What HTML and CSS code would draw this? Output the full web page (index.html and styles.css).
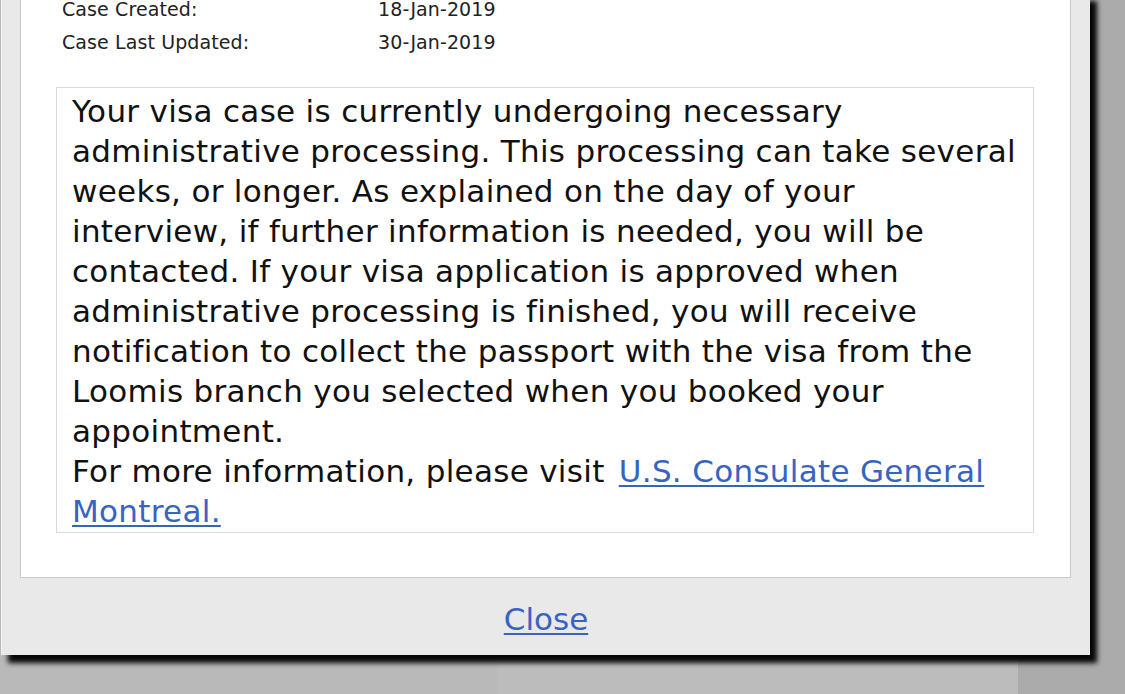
FILE: index.html
```html
<!DOCTYPE html>
<html>
<head>
<meta charset="utf-8">
<link rel="stylesheet" href="styles.css">
</head>
<body>
<div class="backdrop">
  <div class="bg-a"></div>
  <div class="bg-b"></div>
  <div class="bg-c"></div>
</div>
<div class="dialog">
  <div class="panel">
    <div class="info">
      <div class="row"><span class="label">Case Created:</span><span class="value">18-Jan-2019</span></div>
      <div class="row"><span class="label">Case Last Updated:</span><span class="value">30-Jan-2019</span></div>
    </div>
    <div class="message">
      <div class="para">Your visa case is currently undergoing necessary administrative processing. This processing can take several weeks, or longer. As explained on the day of your interview, if further information is needed, you will be contacted. If your visa application is approved when administrative processing is finished, you will receive notification to collect the passport with the visa from the Loomis branch you selected when you booked your appointment.</div>
      <div class="para">For more information, please visit <a href="#">U.S. Consulate General Montreal.</a></div>
    </div>
  </div>
  <div class="footer"><a href="#">Close</a></div>
</div>
</body>
</html>
```
FILE: styles.css
```css
html, body {
  margin: 0;
  padding: 0;
  width: 1125px;
  height: 694px;
  overflow: hidden;
  font-family: "DejaVu Sans", Verdana, sans-serif;
}
body {
  position: relative;
}
.backdrop {
  display: grid;
  grid-template-columns: 497px 521px 1fr;
  height: 694px;
}
.bg-a { background: #b9b9b9; }
.bg-b { background: #bcbcbc; }
.bg-c { background: #ababab; }

.dialog {
  position: absolute;
  left: 1px;
  top: -7px;
  width: 1089px;
  background: #e9e9e9;
  border-left: 1px solid #f4f4f4;
  box-sizing: border-box;
  box-shadow: 7px 8px 5px rgba(0, 0, 0, 0.97);
}
.panel {
  margin: 0 19px 0 18px;
  background: #fff;
  border: 1px solid #c9c9c9;
  border-top: none;
  padding: 0 36px 44px 35px;
}
.info {
  padding-left: 6px;
  padding-bottom: 28px;
  font-size: 19px;
  letter-spacing: 0.1px;
  color: #222;
}
.row {
  display: flex;
  height: 33px;
  line-height: 33px;
}
.label {
  width: 316px;
}
.message {
  border: 1px solid #dadada;
  padding: 3px 16px 1px 15px;
  font-size: 31px;
  letter-spacing: 0.3px;
  line-height: 40px;
  color: #111;
}
.message a, .footer a {
  color: #3764c3;
  text-decoration: underline;
  text-decoration-thickness: 2px;
  text-underline-offset: 3px;
}
.message a {
  margin-left: 4px;
}
.footer {
  height: 77px;
  box-sizing: border-box;
  padding-top: 5px;
  display: flex;
  align-items: center;
  justify-content: center;
  font-size: 31px;
}
```
